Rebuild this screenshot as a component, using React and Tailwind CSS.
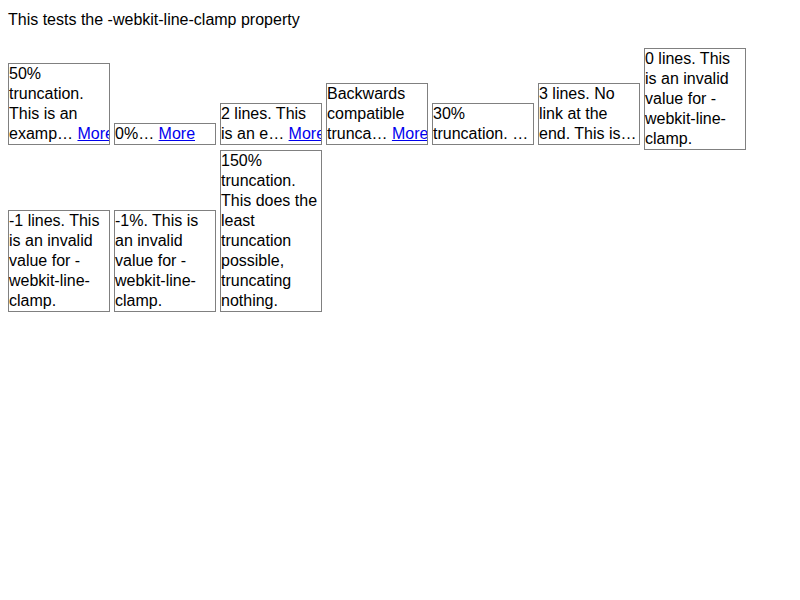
import React from "react";

const font = { fontFamily: '"Liberation Sans", Arial, sans-serif' };

function More() {
  return <a href="#" className="text-[#0000ee] underline">More</a>;
}

function Box({ lines, clip }) {
  return (
    <div
      className={
        "inline-block align-baseline w-[102px] mr-1 border border-[#808080] whitespace-nowrap" +
        (clip ? " overflow-hidden mb-[-1px]" : "")
      }
    >
      {lines.map((l, i) => (
        <div key={i}>{l}</div>
      ))}
    </div>
  );
}

export default function App() {
  return (
    <div className="p-2 text-[16px] leading-[20px] text-black bg-white min-h-[600px]" style={font}>
      <div className="pt-[2px] mb-[18px]">This tests the -webkit-line-clamp property</div>
      <div>
        <Box clip lines={["50%", "truncation.", "This is an", <>examp… <More /></>]} />
        <Box clip lines={[<>0%… <More /></>]} />
        <Box clip lines={["2 lines. This", <>is an e… <More /></>]} />
        <Box clip lines={["Backwards", "compatible", <>trunca… <More /></>]} />
        <Box clip lines={["30%", "truncation. …"]} />
        <Box clip lines={["3 lines. No", "link at the", "end. This is…"]} />
        <Box lines={["0 lines. This", "is an invalid", "value for -", "webkit-line-", "clamp."]} />
      </div>
      <div>
        <Box lines={["-1 lines. This", "is an invalid", "value for -", "webkit-line-", "clamp."]} />
        <Box lines={["-1%. This is", "an invalid", "value for -", "webkit-line-", "clamp."]} />
        <Box lines={["150%", "truncation.", "This does the", "least", "truncation", "possible,", "truncating", "nothing."]} />
      </div>
    </div>
  );
}
